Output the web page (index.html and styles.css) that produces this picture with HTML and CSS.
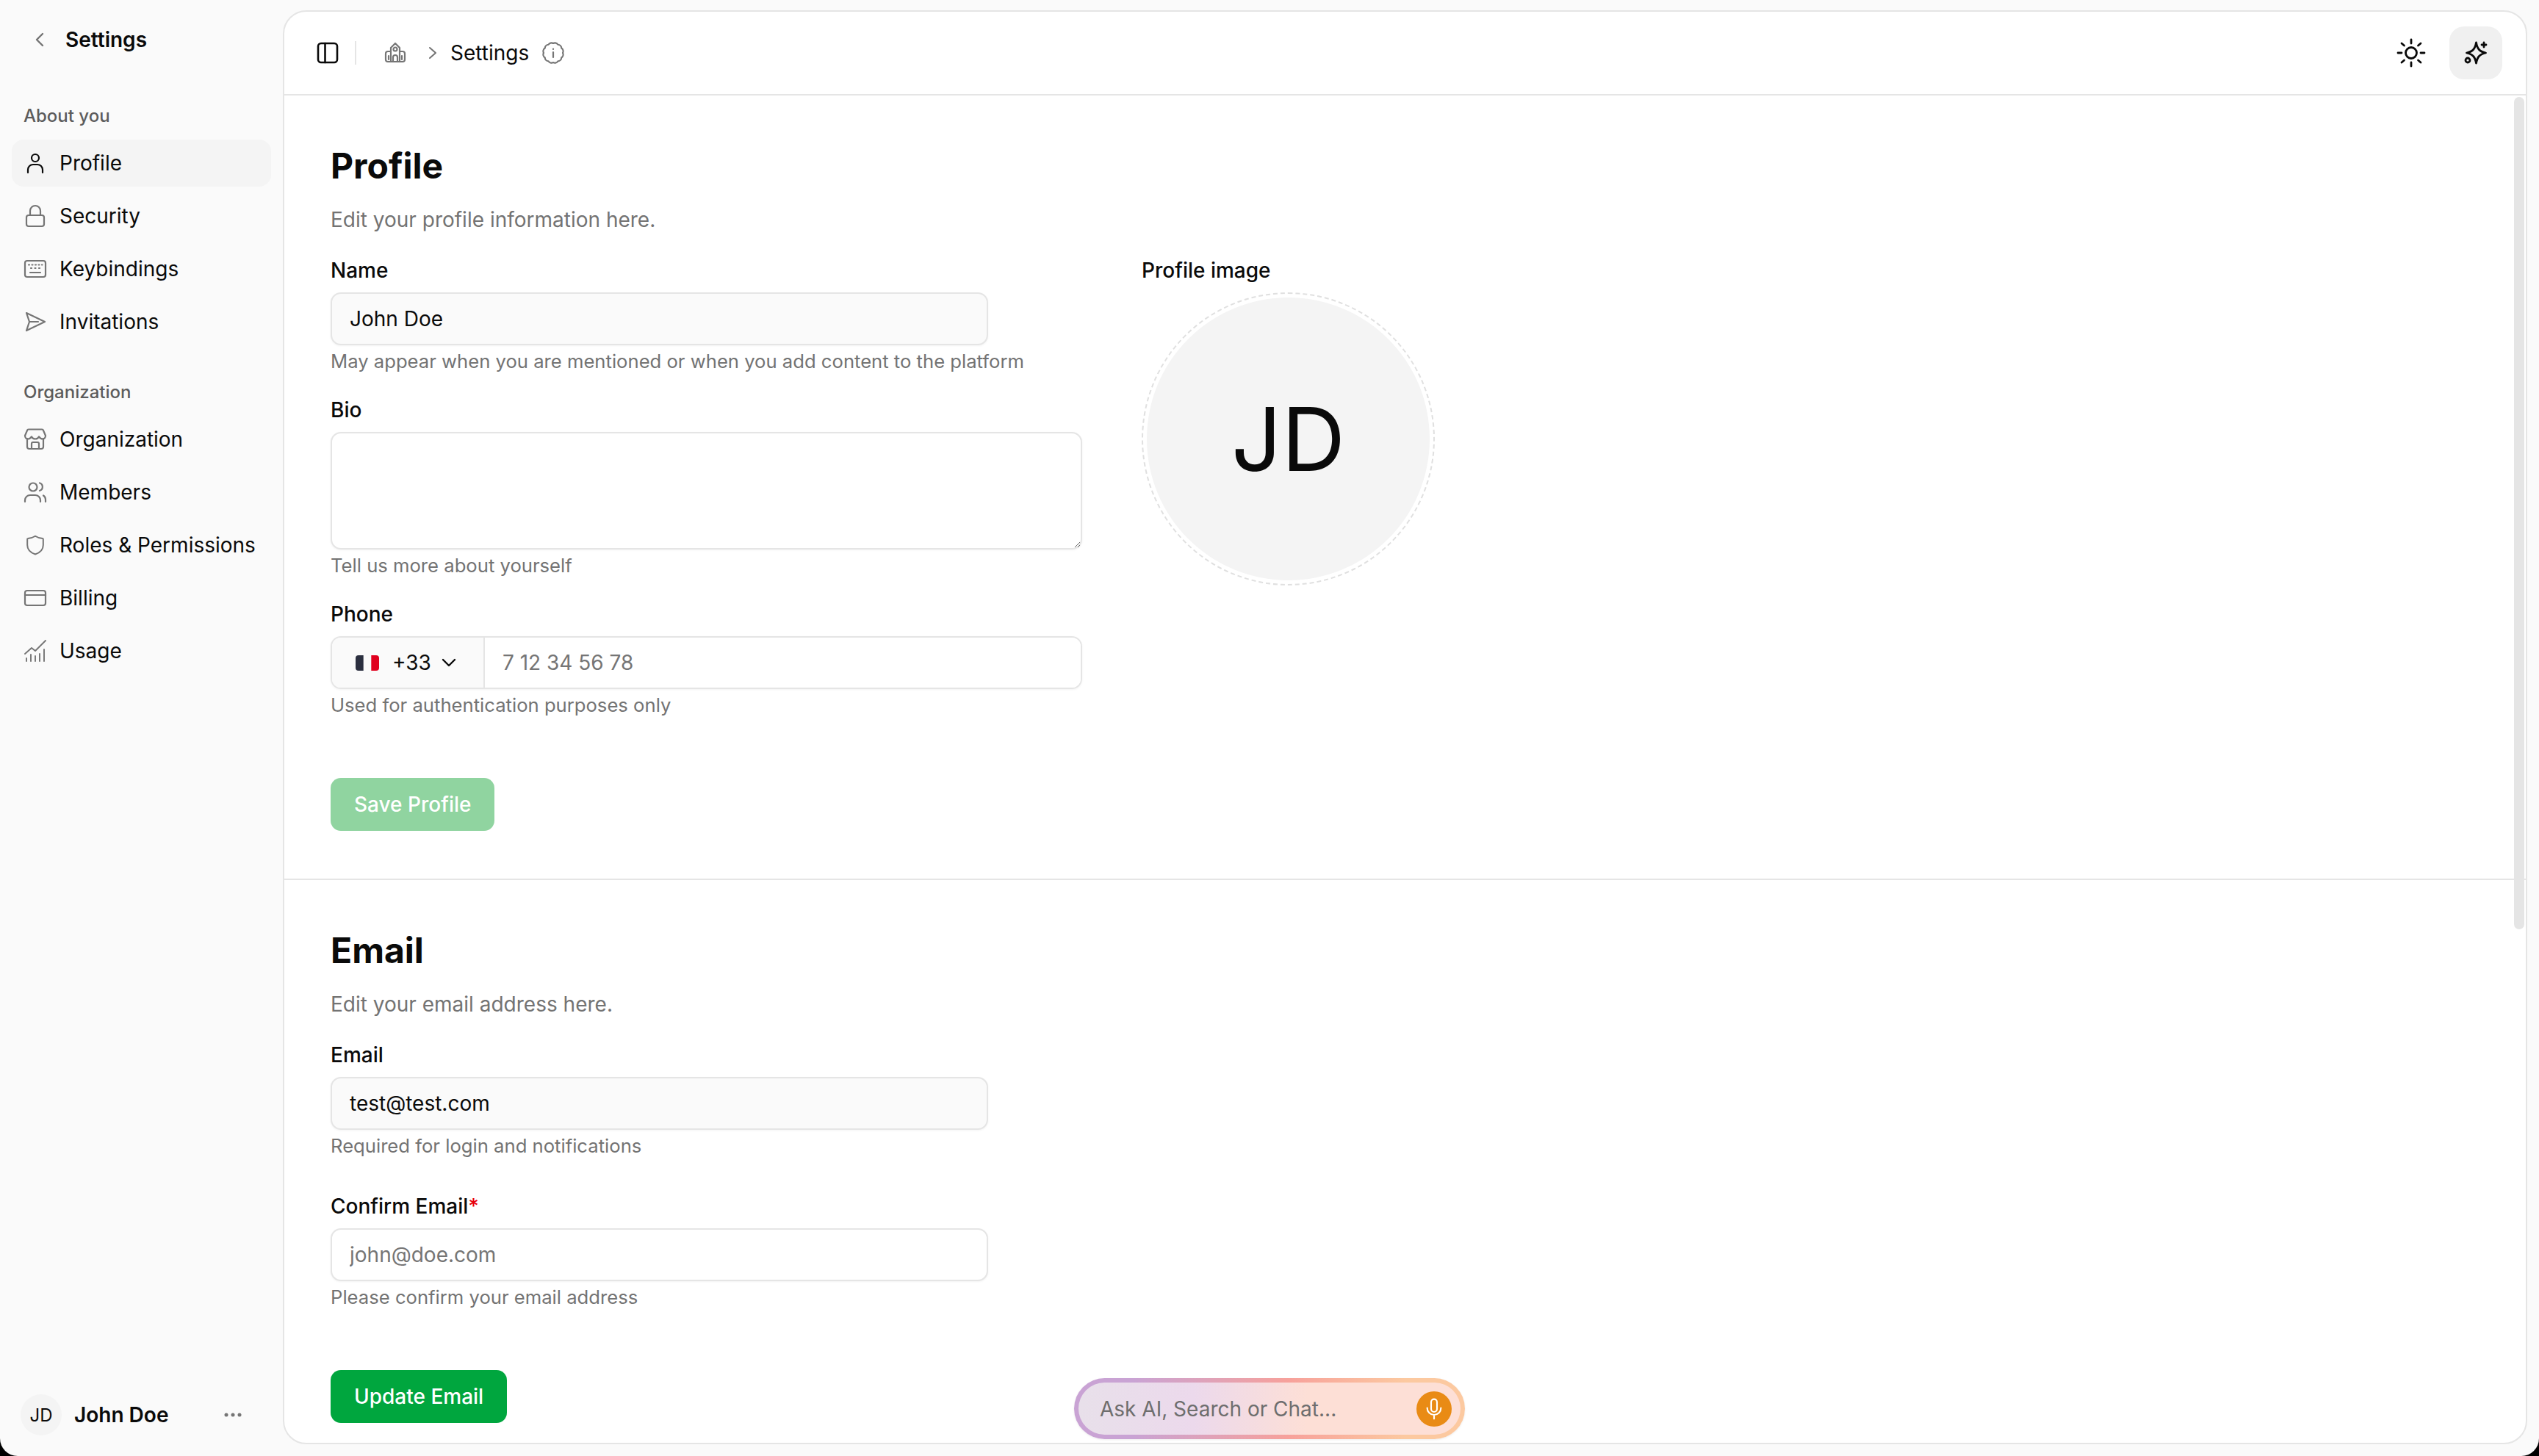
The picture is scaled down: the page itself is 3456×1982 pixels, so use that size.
FILE: index.html
```html
<!DOCTYPE html>
<html lang="en">
<head>
  <meta charset="UTF-8" />
  <meta name="viewport" content="width=device-width, initial-scale=1.0" />
  <title>Settings</title>
  <link rel="stylesheet" href="styles.css">
</head>
<body>
  <div class="app">
    <aside class="sidebar">
      <div class="side-title">
        <svg class="back-icon" viewBox="0 0 16 24"><path d="M12 4l-8 8 8 8"/></svg>
        <span>Settings</span>
      </div>

      <div class="side-group">
        <div class="side-label">About you</div>
        <a class="nav-item active"><svg class="icon icon-user" viewBox="0 0 32 32"><circle cx="16" cy="9" r="5"/><path d="M6 29v-4a7 7 0 0 1 7-7h6a7 7 0 0 1 7 7v4"/></svg>Profile</a>
        <a class="nav-item"><svg class="icon" viewBox="0 0 32 32"><rect x="4" y="15" width="24" height="15" rx="3"/><path d="M9 15V9a7 7 0 0 1 14 0v6"/></svg>Security</a>
        <a class="nav-item"><svg class="icon" viewBox="0 0 32 32"><rect x="2" y="5" width="28" height="22" rx="3"/><path d="M7 10.5h1M11.5 10.5h1M16 10.5h1M20.5 10.5h1M25 10.5h.5M10 15h1M15.5 15h1M21 15h1M9 21h14"/></svg>Keybindings</a>
        <a class="nav-item"><svg class="icon" viewBox="0 0 32 32"><path d="M4 4l25 12L4 28l4-12zM8 16h12"/></svg>Invitations</a>
      </div>

      <div class="side-group">
        <div class="side-label">Organization</div>
        <a class="nav-item"><svg class="icon" viewBox="0 0 32 32"><path d="M7 2.500h18a2 2 0 0 1 2 1.500l3 7c0 3-2 4.500-4 4.500s-3.500-1-5-3c-1 2-2 3-5 3s-4-1-5-3c-1.500 2-3 3-5 3s-4-1.500-4-4.500l3-7a2 2 0 0 1 2-1.500z"/><path d="M5 15v11a3 3 0 0 0 3 3h16a3 3 0 0 0 3-3V15M11 29v-7a2 2 0 0 1 2-2h6a2 2 0 0 1 2 2v7"/></svg>Organization</a>
        <a class="nav-item"><svg class="icon" viewBox="0 0 32 32"><circle cx="13" cy="9" r="5.500"/><path d="M2 29v-2a7 7 0 0 1 7-7h7a7 7 0 0 1 7 7v2M22 3.500a5.500 5.500 0 0 1 0 10.500M27 20.500a6.500 6.500 0 0 1 3 5.500v3"/></svg>Members</a>
        <a class="nav-item"><svg class="icon" viewBox="0 0 32 32"><path d="M16 2.500c3 2 6.500 3 11 3.500a1 1 0 0 1 1 1v9c0 7-5 11.500-12 14-7-2.500-12-7-12-14V7a1 1 0 0 1 1-1c4.500-.5 8-1.500 11-3.500z" transform="translate(1.600 1.500) scale(.9)"/></svg>Roles &amp; Permissions</a>
        <a class="nav-item"><svg class="icon" viewBox="0 0 32 32"><rect x="2" y="6" width="28" height="20" rx="3"/><path d="M2 12h28"/></svg>Billing</a>
        <a class="nav-item"><svg class="icon icon-thin" viewBox="0 0 32 32"><path d="M2 20l9-8 5 4L30 2M4 30v-4M10 30v-9M16 30v-7M22 30v-10M28 30V14"/></svg>Usage</a>
      </div>

      <div class="side-user">
        <div class="side-avatar">JD</div>
        <span class="side-name">John Doe</span>
        <svg class="dots" viewBox="0 0 24 6"><circle cx="3" cy="3" r="2.500"/><circle cx="12" cy="3" r="2.500"/><circle cx="21" cy="3" r="2.500"/></svg>
      </div>
    </aside>

    <main class="panel">
      <header class="topbar">
        <svg class="icon icon-dark" viewBox="0 0 32 32"><rect x="3" y="3" width="26" height="26" rx="4"/><path d="M12.500 3v26"/></svg>
        <span class="top-sep"></span>
        <svg class="icon" viewBox="0 0 32 32"><path d="M10 28V9l6-6 6 6v19M10 14H6a3 3 0 0 0-3 3v8a3 3 0 0 0 3 3h20a3 3 0 0 0 3-3v-8a3 3 0 0 0-3-3h-4M13 28v-6a3 3 0 0 1 6 0v6M7 20v5M25 20v5"/><circle cx="16" cy="11" r="2.500"/></svg>
        <svg class="crumb-chevron" viewBox="0 0 12 18"><path d="M2 2l8 7-8 7"/></svg>
        <span class="crumb">Settings</span>
        <svg class="icon info-icon" viewBox="0 0 32 32"><path d="M29 16A5 5 0 0 1 27.260 22.500A5 5 0 0 1 22.500 27.260A5 5 0 0 1 16 29A5 5 0 0 1 9.500 27.260A5 5 0 0 1 4.740 22.500A5 5 0 0 1 3 16A5 5 0 0 1 4.740 9.500A5 5 0 0 1 9.500 4.740A5 5 0 0 1 16 3A5 5 0 0 1 22.500 4.740A5 5 0 0 1 27.260 9.500A5 5 0 0 1 29 16Z"/><path d="M16 15v7M16 10.500v.5"/></svg>
        <div class="top-actions">
          <svg class="action-icon" viewBox="0 0 40 40"><circle cx="20" cy="20" r="7.500"/><path d="M20 2v5M20 33v5M2 20h5M33 20h5M7 7l3.500 3M33 7l-3.500 3M7 33l3.500-3M33 33l-3.500-3"/></svg>
          <button class="ai-btn"><svg class="action-icon" viewBox="0 0 40 40"><path d="M20.500 6c1.500 8 4 12 13 14-9 2-11.500 6-13 14-1.500-8-4-12-13-14 9-2 11.500-6 13-14z"/><circle cx="9" cy="30" r="3"/><path d="M31 6v6M28 9h6"/></svg></button>
        </div>
      </header>

      <div class="content">
        <section class="section">
          <h2>Profile</h2>
          <p class="sub">Edit your profile information here.</p>
          <div class="profile-grid">
            <div class="profile-fields">
              <div class="field">
                <label>Name</label>
                <input class="input short" type="text" value="John Doe" />
                <div class="help">May appear when you are mentioned or when you add content to the platform</div>
              </div>
              <div class="field">
                <label>Bio</label>
                <textarea class="input bio"></textarea>
                <div class="help">Tell us more about yourself</div>
              </div>
              <div class="field">
                <label>Phone</label>
                <div class="phone">
                  <div class="phone-code">
                    <svg class="flag" viewBox="0 0 32 21"><path fill="#2b2f3f" d="M10.700 0H4a4 4 0 0 0-4 4v13a4 4 0 0 0 4 4h6.700z"/><path fill="#e0001e" d="M21.300 0H28a4 4 0 0 1 4 4v13a4 4 0 0 1-4 4h-6.700z"/></svg>
                    <span>+33</span>
                    <svg class="chev-down" viewBox="0 0 20 12"><path d="M2 2l8 8 8-8"/></svg>
                  </div>
                  <input class="phone-input" type="text" placeholder="7 12 34 56 78" />
                </div>
                <div class="help">Used for authentication purposes only</div>
              </div>
              <button class="btn btn-disabled">Save Profile</button>
            </div>
            <div class="profile-image">
              <label>Profile image</label>
              <div class="image-ring"><div class="image-fill">JD</div></div>
            </div>
          </div>
        </section>

        <section class="section">
          <h2>Email</h2>
          <p class="sub">Edit your email address here.</p>
          <div class="field">
            <label>Email</label>
            <input class="input short" type="text" value="test@test.com" />
            <div class="help">Required for login and notifications</div>
          </div>
          <div class="field field-wide">
            <label>Confirm Email<span class="req">*</span></label>
            <input class="input short blank" type="text" placeholder="john@doe.com" />
            <div class="help">Please confirm your email address</div>
          </div>
          <button class="btn btn-update">Update Email</button>
        </section>

        <div class="scrollbar"></div>
      </div>

      <div class="chat-bar">
        <input class="chat-input" type="text" placeholder="Ask AI, Search or Chat..." />
        <div class="mic"><svg viewBox="0 0 24 24"><rect x="9" y="2" width="6" height="13" rx="3"/><path d="M19 11a7 7 0 0 1-14 0M12 18v4"/></svg></div>
      </div>
    </main>
  </div>
</body>
</html>
```

FILE: styles.css
```css
* { box-sizing: border-box; }
html, body { margin: 0; height: 100%; background: #000; }
body { font-family: Inter, "Liberation Sans", sans-serif; font-size: 28px; color: #0a0a0a; overflow: hidden; }
input, textarea, button { font: inherit; color: inherit; }
input::placeholder { color: #757575; opacity: 1; }
svg { display: block; flex: none; fill: none; stroke-linecap: round; stroke-linejoin: round; }

.app { display: flex; height: 1982px; background: #fafafa; border-radius: 0 0 24px 24px; overflow: hidden; }

/* sidebar */
.sidebar { width: 385px; flex: none; padding: 34px 16px 28px; display: flex; flex-direction: column; }
.side-title { display: flex; align-items: center; gap: 25px; padding-left: 28px; height: 40px; font-weight: 600; }
.back-icon { width: 20px; height: 24px; stroke: #737373; stroke-width: 2.4; }
.side-group { margin-bottom: 40px; }
.side-title + .side-group { margin-top: 68px; }
.side-label { padding-left: 16px; font-size: 24px; font-weight: 450; line-height: 32px; color: #5c5c5c; margin-bottom: 16px; }
.nav-item { display: flex; align-items: center; gap: 17px; height: 64px; margin-bottom: 8px; padding-left: 16px; border-radius: 16px; white-space: nowrap; }
.nav-item.active { background: #f4f4f4; }
.icon { width: 32px; height: 32px; stroke: #757575; stroke-width: 2.2; }
.icon-user { stroke: #0a0a0a; }
.icon-thin { stroke-width: 1.9; }
.icon-dark { stroke: #0a0a0a; stroke-width: 2.6; }

.side-user { margin-top: auto; display: flex; align-items: center; padding-left: 12px; height: 56px; }
.side-avatar { width: 56px; height: 56px; border-radius: 50%; background: #f4f4f4; display: flex; align-items: center; justify-content: center; font-size: 24px; }
.side-name { margin-left: 17px; font-weight: 600; }
.dots { width: 24px; height: 6px; fill: #757575; margin-left: auto; margin-right: 40px; }

/* main panel */
.panel { flex: 1; margin: 14px 16px 16px 0; background: #fff; border: 2px solid #e5e5e5; border-radius: 32px; overflow: hidden; position: relative; display: flex; flex-direction: column; min-width: 0; }
.topbar { height: 114px; flex: none; border-bottom: 2px solid #e5e5e5; display: flex; align-items: center; padding-left: 43px; }
.top-sep { width: 2px; height: 32px; background: #e5e5e5; margin: 0 37px 0 21px; }
.crumb-chevron { width: 12px; height: 18px; stroke: #737373; stroke-width: 2; margin: 0 18px 0 29px; }
.info-icon { margin-left: 17px; }
.top-actions { margin-left: auto; display: flex; align-items: center; gap: 32px; padding-right: 32px; }
.action-icon { width: 40px; height: 40px; stroke: #0a0a0a; stroke-width: 2.8; }
.ai-btn { width: 72px; height: 72px; border: 0; border-radius: 20px; background: #f0f0f0; display: flex; align-items: center; justify-content: center; padding: 0; }

.content { flex: 1; overflow: hidden; position: relative; }
.section { padding: 66px 0 65px 63px; border-bottom: 2px solid #e5e5e5; }
h2 { margin: 0; font-size: 48px; line-height: 60px; font-weight: 700; }
.sub { margin: 23px 0 29px; line-height: 40px; color: #737373; }
.profile-grid { display: flex; gap: 81px; }
.profile-fields { width: 1023px; }

.field { margin-bottom: 28px; }
.field-wide { margin-top: 44px; }
label { display: block; font-weight: 450; line-height: 40px; margin-bottom: 10px; }
.req { color: #e7000b; }
.input { display: block; border: 2px solid #e5e5e5; border-radius: 14px; background: #fafafa; padding: 0 24px; outline: 0; box-shadow: 0 1px 3px rgba(0, 0, 0, .05); }
.short { width: 895px; height: 72px; }
.blank { background: #fff; }
.bio { width: 1023px; height: 160px; background: #fff; padding: 16px 24px; }
.help { margin-top: 4px; font-size: 25.650px; line-height: 36px; color: #737373; }

.phone { display: flex; height: 72px; width: 1023px; border: 2px solid #e5e5e5; border-radius: 14px; overflow: hidden; box-shadow: 0 1px 3px rgba(0, 0, 0, .05); }
.phone-code { width: 208px; flex: none; display: flex; align-items: center; background: #fafafa; border-right: 2px solid #e5e5e5; padding-left: 32px; }
.flag { width: 32px; height: 21px; margin-right: 18px; }
.chev-down { width: 20px; height: 12px; stroke: #0a0a0a; stroke-width: 2.4; margin-left: 14px; }
.phone-input { flex: 1; border: 0; outline: 0; padding: 0 24px; min-width: 0; }

.btn { display: block; height: 72px; border: 0; border-radius: 14px; color: #fff; padding: 0 32px; font-weight: 450; }
.btn-disabled { background: #90d4a0; margin-top: 81px; }
.btn-update { background: #00a63e; margin-top: 81px; }

.profile-image label { margin-bottom: 10px; }
.image-ring { width: 399px; height: 399px; border: 2px dashed #e0e0e0; border-radius: 50%; padding: 5px; }
.image-fill { height: 100%; border-radius: 50%; background: #f4f4f4; display: flex; align-items: center; justify-content: center; font-size: 120px; }

.scrollbar { position: absolute; top: 2px; right: 2px; width: 14px; height: 1133px; border-radius: 7px; background: #e5e5e5; }

/* chat pill */
.chat-bar { position: absolute; left: 1075px; bottom: 5px; width: 532px; height: 83px; border: 6px solid transparent; border-radius: 42px; display: flex; align-items: center; padding: 0 12px 0 29px; background: linear-gradient(90deg, #e8e0ea, #ecd9ec 30%, #fddfd6 60%, #fddfd6) padding-box, linear-gradient(90deg, #c9a3d4 15%, #f7a19b 55%, #fcc9a0 85%) border-box; box-shadow: 0 1px 3px rgba(0, 0, 0, .08); }
.chat-input { flex: 1; min-width: 0; border: 0; outline: 0; background: transparent; padding: 0; }
.chat-input::placeholder { color: #6e6e6e; }
.mic { width: 48px; height: 48px; flex: none; border-radius: 50%; background: #e98b15; display: flex; align-items: center; justify-content: center; }
.mic svg { width: 32px; height: 32px; stroke: #fff; stroke-width: 1.6; }
```
